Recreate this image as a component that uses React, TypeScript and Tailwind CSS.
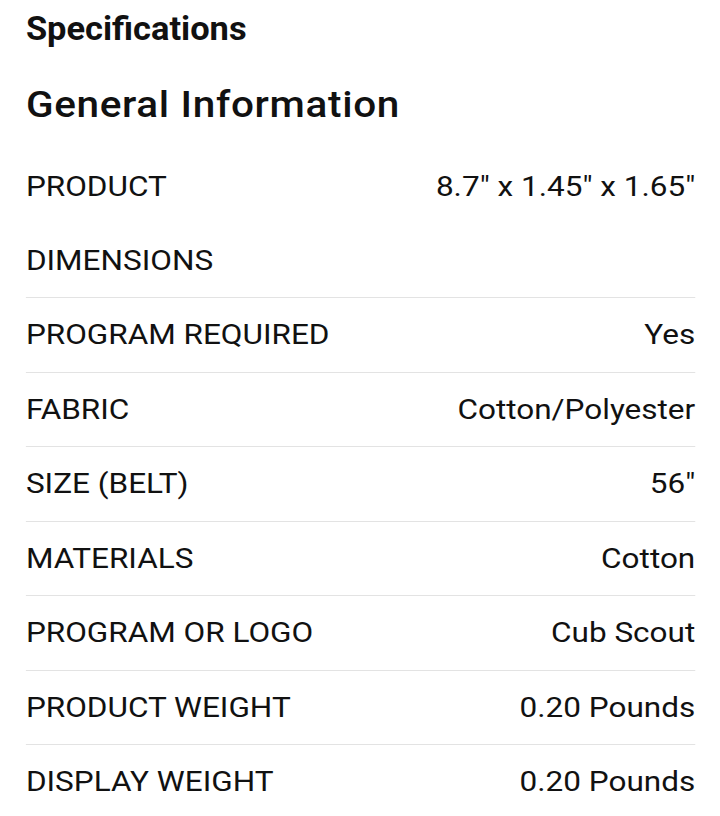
import React from "react";

const rows: [string, string][] = [
  ["PRODUCT DIMENSIONS", '8.7" x 1.45" x 1.65"'],
  ["PROGRAM REQUIRED", "Yes"],
  ["FABRIC", "Cotton/Polyester"],
  ["SIZE (BELT)", '56"'],
  ["MATERIALS", "Cotton"],
  ["PROGRAM OR LOGO", "Cub Scout"],
  ["PRODUCT WEIGHT", "0.20 Pounds"],
  ["DISPLAY WEIGHT", "0.20 Pounds"],
];

export default function App() {
  return (
    <div className="min-h-screen bg-white overflow-hidden">
      <div className="w-[640px] origin-top-left scale-x-[1.125] text-[#111] font-['Roboto',sans-serif] pl-[23px] pr-[22px] pt-[6px]">
        <h2 className="text-[34px] font-bold leading-[44px] whitespace-nowrap">
          <span className="inline-block origin-left scale-x-[0.9]">Specifications</span>
        </h2>
        <h3 className="text-[36px] font-medium leading-[44px] tracking-[0.6px] mt-[33px] mb-[23px] whitespace-nowrap">
          General Information
        </h3>
        <div>
          {rows.map(([k, v], i) => (
            <div
              key={i}
              className={`flex justify-between gap-6 text-[28px] leading-[73.5px] ${i < rows.length - 1 ? "border-b border-[#e3e3e3]" : ""}`}
            >
              <span className={i === 0 ? "w-[200px]" : ""}>{k}</span>
              <span className="text-right whitespace-nowrap">{v}</span>
            </div>
          ))}
        </div>
      </div>
    </div>
  );
}
